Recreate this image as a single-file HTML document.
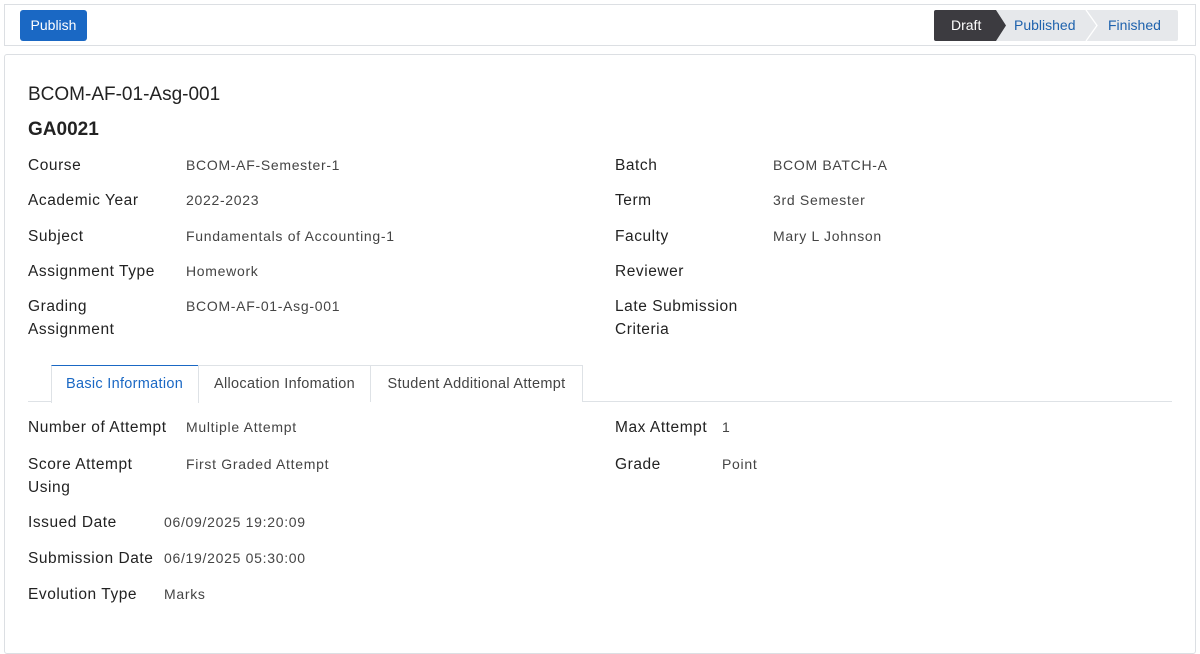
<!DOCTYPE html>
<html><head><meta charset="utf-8"><style>
*{margin:0;padding:0;box-sizing:border-box}
body{width:1200px;height:613px;overflow:hidden;background:#fff;font-family:"Liberation Sans",sans-serif;position:relative}
.a{position:absolute;white-space:nowrap}
.top{left:4px;top:4px;width:1192px;height:42px;border:1px solid #dcdfe3;background:#fff}
.btn{left:20px;top:10px;width:67px;height:31px;background:#1a68c4;border-radius:3px;color:#fff;font-size:14px;line-height:31px;text-align:center}
.card{left:4px;top:54px;width:1192px;height:600px;border:1px solid #dcdfe3;border-radius:3px;background:#fff}
.l{font-size:15.5px;color:#222;letter-spacing:0.55px;line-height:23px}
.v{font-size:14px;color:#444;letter-spacing:0.7px;line-height:23px}
.tab{top:365px;height:37px;border:1px solid #dee2e6;border-bottom:none;font-size:14.5px;color:#444;line-height:36px;text-align:center;background:#fff;letter-spacing:0.3px}
</style></head><body>
<div class="a top"></div>
<div class="a btn">Publish</div>
<svg class="a" style="left:934px;top:10px" width="245" height="31">
<rect x="0" y="0" width="244" height="31" rx="2" fill="#e6e8eb"/>
<path d="M2 0 H62 L72 15.5 L62 31 H2 Q0 31 0 29 V2 Q0 0 2 0Z" fill="#3c3b40"/>
<path d="M152 0 L163 15.5 L152 31" fill="none" stroke="#fff" stroke-width="1.3"/>
<text x="17" y="20" font-family="Liberation Sans" font-size="14" fill="#fff">Draft</text>
<text x="80" y="20" font-family="Liberation Sans" font-size="14" fill="#1e62ad">Published</text>
<text x="174" y="20" font-family="Liberation Sans" font-size="14" fill="#1e62ad">Finished</text>
</svg>
<div class="a card"></div>
<div class="a" style="left:28px;top:84px;font-size:19px;color:#222">BCOM-AF-01-Asg-001</div>
<div class="a" style="left:28px;top:119px;font-size:19px;color:#222;font-weight:600">GA0021</div>

<div class="a l" style="left:28px;top:154px">Course</div><div class="a v" style="left:186px;top:154px">BCOM-AF-Semester-1</div>
<div class="a l" style="left:28px;top:189px">Academic Year</div><div class="a v" style="left:186px;top:189px">2022-2023</div>
<div class="a l" style="left:28px;top:225px">Subject</div><div class="a v" style="left:186px;top:225px">Fundamentals of Accounting-1</div>
<div class="a l" style="left:28px;top:260px">Assignment Type</div><div class="a v" style="left:186px;top:260px">Homework</div>
<div class="a l" style="left:28px;top:295px">Grading<br>Assignment</div><div class="a v" style="left:186px;top:295px">BCOM-AF-01-Asg-001</div>

<div class="a l" style="left:615px;top:154px">Batch</div><div class="a v" style="left:773px;top:154px">BCOM BATCH-A</div>
<div class="a l" style="left:615px;top:189px">Term</div><div class="a v" style="left:773px;top:189px">3rd Semester</div>
<div class="a l" style="left:615px;top:225px">Faculty</div><div class="a v" style="left:773px;top:225px">Mary L Johnson</div>
<div class="a l" style="left:615px;top:260px">Reviewer</div>
<div class="a l" style="left:615px;top:295px">Late Submission<br>Criteria</div>

<div class="a" style="left:28px;top:401px;width:1144px;height:1px;background:#dee2e6"></div>
<div class="a tab" style="left:51px;width:148px;border-top:1px solid #1a68c4;color:#1a68c4;height:38px;text-align:left;padding-left:14px">Basic Information</div>
<div class="a tab" style="left:198px;width:173px">Allocation Infomation</div>
<div class="a tab" style="left:370px;width:213px">Student Additional Attempt</div>

<div class="a l" style="left:28px;top:416px">Number of Attempt</div><div class="a v" style="left:186px;top:416px">Multiple Attempt</div>
<div class="a l" style="left:28px;top:453px">Score Attempt<br>Using</div><div class="a v" style="left:186px;top:453px">First Graded Attempt</div>
<div class="a l" style="left:615px;top:416px">Max Attempt</div><div class="a v" style="left:722px;top:416px">1</div>
<div class="a l" style="left:615px;top:453px">Grade</div><div class="a v" style="left:722px;top:453px">Point</div>
<div class="a l" style="left:28px;top:511px">Issued Date</div><div class="a v" style="left:164px;top:511px">06/09/2025 19:20:09</div>
<div class="a l" style="left:28px;top:547px">Submission Date</div><div class="a v" style="left:164px;top:547px">06/19/2025 05:30:00</div>
<div class="a l" style="left:28px;top:583px">Evolution Type</div><div class="a v" style="left:164px;top:583px">Marks</div>
</body></html>
